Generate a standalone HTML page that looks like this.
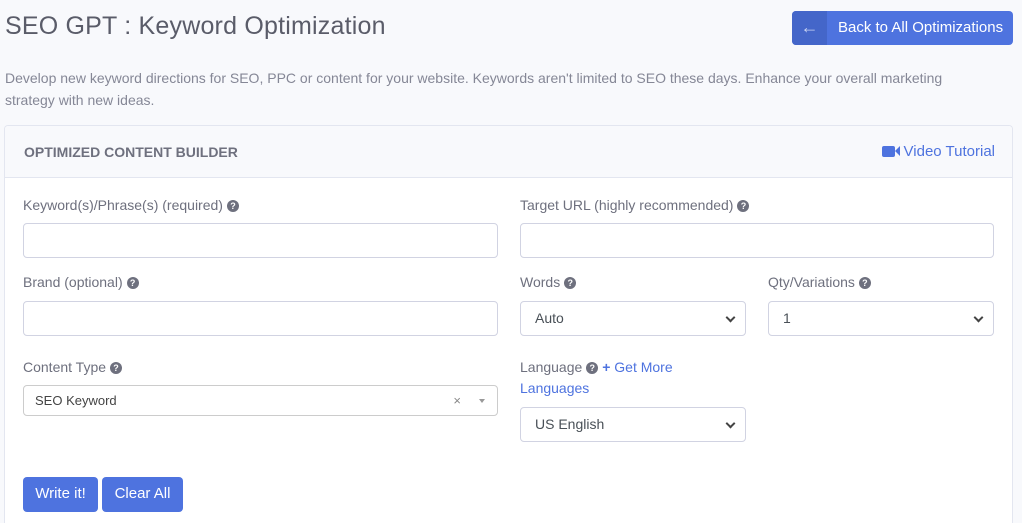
<!DOCTYPE html>
<html><head><style>
*{box-sizing:border-box}
html{overflow:hidden;height:523px}
body{margin:0;width:1022px;height:523px;overflow:hidden;background:#f8f9fc;font-family:"Liberation Sans",sans-serif;color:#858796;position:relative}
.abs{position:absolute}
h1{position:absolute;left:5px;top:12px;margin:0;font-size:25px;font-weight:400;color:#5a5c69;letter-spacing:0.2px}
.back{position:absolute;left:792px;top:11px;width:221px;height:34px;background:#4e73df;border-radius:4px;color:#fff;font-size:15px}
.back .ic{position:absolute;left:0;top:0;width:35px;height:34px;background:#4466c9;border-radius:4px 0 0 4px;color:#c8d2f2;font-size:18px;text-align:center;line-height:32px;font-weight:bold}
.back span{position:absolute;left:46px;top:8px}
.desc{left:5px;top:67px;font-size:14px;line-height:22px;width:975px}
.card{left:4px;top:125px;width:1009px;height:398px;background:#fff;border:1px solid #e3e6f0;border-bottom:none;border-radius:4px 4px 0 0;overflow:hidden}
.hdr{height:52px;background:#f8f9fc;border-bottom:1px solid #e3e6f0;position:relative}
.hdr b{position:absolute;left:19px;top:18px;font-size:14px;color:#6e707e;font-weight:700}
.vt{position:absolute;right:17px;top:17px;color:#4e73df;font-size:15px}
.lbl{position:absolute;font-size:14px;color:#6e707e}
.q{display:inline-block;width:12px;height:12px;border-radius:50%;background:#6e707e;color:#fff;font-size:9px;line-height:12px;text-align:center;font-weight:bold;vertical-align:1px;margin-left:4px}
.inp{position:absolute;height:35px;border:1px solid #d1d3e2;border-radius:4px;background:#fff;font-size:14px;color:#6e707e;padding:8px 14px}
.sel::after{content:"";position:absolute;right:11px;top:12px;width:5px;height:5px;border-right:2px solid #444;border-bottom:2px solid #444;transform:rotate(45deg)}
.btn{position:absolute;top:477px;height:35px;background:#4e73df;color:#fff;border-radius:4px;font-size:15px;text-align:center;line-height:34px}
</style></head><body>
<h1>SEO GPT : Keyword Optimization</h1>
<div class="back"><div class="ic">&#8592;</div><span>Back to All Optimizations</span></div>
<div class="abs desc">Develop new keyword directions for SEO, PPC or content for your website. Keywords aren't limited to SEO these days. Enhance your overall marketing strategy with new ideas.</div>
<div class="abs card"><div class="hdr"><b>OPTIMIZED CONTENT BUILDER</b><div class="vt"><span style="display:inline-block;width:13px;height:11px;background:#4e73df;border-radius:2px;vertical-align:-1px"></span><span style="display:inline-block;width:0;height:0;border-top:5px solid transparent;border-bottom:5px solid transparent;border-right:5px solid #4e73df;vertical-align:0px;margin-right:4px"></span>Video Tutorial</div></div></div>
<div class="lbl" style="left:23px;top:197px">Keyword(s)/Phrase(s) (required)<span class="q">?</span></div>
<div class="inp" style="left:23px;top:223px;width:475px"></div>
<div class="lbl" style="left:520px;top:197px">Target URL (highly recommended)<span class="q">?</span></div>
<div class="inp" style="left:520px;top:223px;width:474px"></div>
<div class="lbl" style="left:23px;top:274px">Brand (optional)<span class="q">?</span></div>
<div class="inp" style="left:23px;top:301px;width:475px"></div>
<div class="lbl" style="left:520px;top:274px">Words<span class="q">?</span></div>
<div class="inp sel" style="left:520px;top:301px;width:226px;color:#495057">Auto</div>
<div class="lbl" style="left:768px;top:274px">Qty/Variations<span class="q">?</span></div>
<div class="inp sel" style="left:768px;top:301px;width:226px;color:#495057">1</div>
<div class="lbl" style="left:23px;top:359px">Content Type<span class="q">?</span></div>
<div class="inp" style="left:23px;top:385px;width:475px;height:31px;padding:7px 11px;font-size:13px;color:#444;border-color:#ccc">SEO Keyword<span style="position:absolute;right:36px;top:7px;color:#888">×</span><span style="position:absolute;right:12px;top:13px;border-left:3px solid transparent;border-right:3px solid transparent;border-top:4px solid #999"></span></div>
<div class="lbl" style="left:520px;top:357px;line-height:21px">Language<span class="q">?</span> <span style="color:#4e73df"><b>+</b> Get More<br>Languages</span></div>
<div class="inp sel" style="left:520px;top:407px;width:226px;color:#495057">US English</div>
<div class="btn" style="left:23px;width:75px">Write it!</div>
<div class="btn" style="left:102px;width:81px">Clear All</div>
</body></html>
